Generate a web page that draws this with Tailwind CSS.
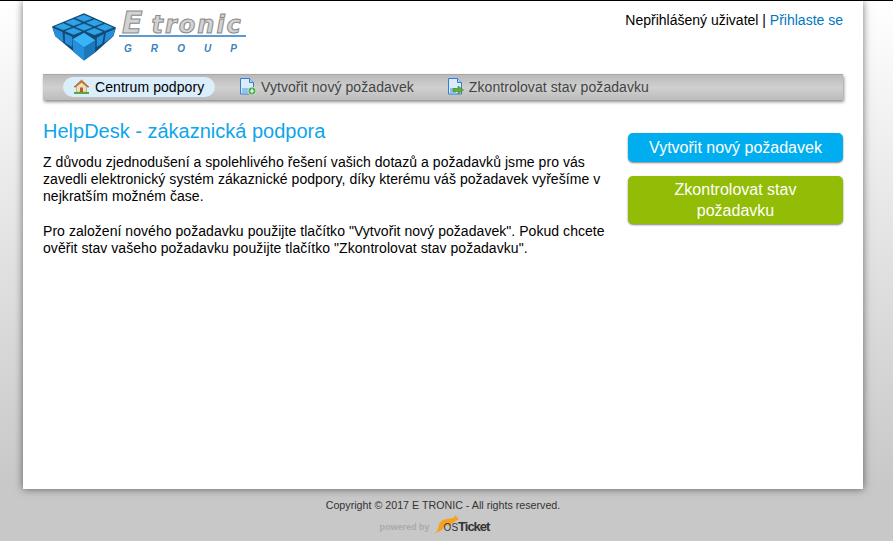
<!DOCTYPE html>
<html lang="cs">
<head>
<meta charset="utf-8">
<script src="https://cdn.jsdelivr.net/npm/@tailwindcss/browser@4"></script>
<title>HelpDesk</title>
</head>
<body class="h-[541px] overflow-hidden border-t border-black bg-gradient-to-b from-white to-[#c8c8c8] to-[90%] font-['Liberation_Sans',Arial,sans-serif] text-sm text-black">
<div class="ml-[23px] flex h-[488px] w-[840px] flex-col bg-white px-5 shadow-[0_0_8px_rgba(0,0,0,0.55)]">
  <header class="flex h-[73px] shrink-0 justify-between">
    <div class="flex pt-[9px] pl-[9px]">
      <svg width="64" height="50" viewBox="62 33 196 150" class="mt-[2px] shrink-0">
        <path d="M160 35 L258 79 L250 106 L195 155 L160 180 L125 150 L72 106 L62 76Z" fill="#124a75"/>
        <g fill="#2fa3e8" stroke="#2fa3e8" stroke-width="2" stroke-linejoin="round">
          <path d="M160 41 L184 51 L160 60 L136 50Z"/>
          <path d="M192 55 L216 65 L192 74 L168 64Z"/>
          <path d="M224 69 L248 79 L224 88 L200 78Z"/>
          <path d="M128 54 L152 64 L128 73 L104 63Z"/>
          <path d="M160 68 L184 78 L160 87 L136 77Z"/>
          <path d="M192 82 L216 92 L192 101 L168 91Z"/>
          <path d="M96 67 L120 77 L96 86 L72 76Z"/>
          <path d="M128 81 L152 91 L128 100 L104 90Z"/>
        </g>
        <g fill="#2490dc">
          <path d="M64 80 L94 93 L97 124 L72 106Z"/>
          <path d="M101 97 L124 107 L124 139 L102 126Z"/>
          <path d="M199 110 L221 99 L216 128 L199 139Z"/>
          <path d="M227 96 L256 83 L248 106 L222 126Z"/>
        </g>
        <path d="M160 95 L195 118 L160 140 L125 115Z" fill="#38b4f7"/>
        <path d="M125 115 L160 140 L160 180 L127 153Z" fill="#2490dc"/>
        <path d="M160 140 L195 118 L194 155 L160 180Z" fill="#1c78bc"/>
      </svg>
      <div class="ml-[3px] flex w-[127px] flex-col">
        <div class="flex h-[25px] items-baseline gap-[9px] pl-[3px] font-['DejaVu_Sans',sans-serif] leading-[25px] font-bold whitespace-nowrap text-[#d2d2d2] italic [-webkit-text-stroke:1px_#8a8a8a]">
          <span class="text-[30px]">E</span><span class="text-[24px] tracking-[2px]">tronic</span>
        </div>
        <div class="h-[1.5px] bg-[#5b9bd5]"></div>
        <div class="mt-[6px] flex justify-between pr-[9px] pl-[5px] text-[10px] leading-[12px] font-bold text-[#3b82c0] italic"><span>G</span><span>R</span><span>O</span><span>U</span><span>P</span></div>
      </div>
    </div>
    <p class="pt-[11px] leading-4">Nepřihlášený uživatel | <a class="text-[#0077c0]">Přihlaste se</a></p>
  </header>
  <nav class="flex h-[26px] shrink-0 items-center border-t border-[#a8a8a8] bg-gradient-to-b from-[#bababa] via-[#d0d0d0] to-[#bcbcbc] pb-[2px] pl-5 tracking-[0.07px] shadow-[1px_2px_3px_rgba(0,0,0,0.45)]">
    <a class="flex h-5 w-[152px] items-center gap-[5px] rounded-[10px] bg-[#daeefc] pl-[10px] text-black">
      <svg width="17" height="15" viewBox="0 0 17 15"><path d="M1 8 L8.5 1 L16 8 L14 8 L8.5 3.5 L3 8Z" fill="#c9742c" stroke="#8f4e1c" stroke-width=".5"/><path d="M3.5 7.5 L8.5 3.5 L13.5 7.5 V13 H3.5Z" fill="#f2dfb4" stroke="#a8865a" stroke-width=".5"/><rect x="7" y="8.5" width="3" height="4.5" fill="#a8642c"/><path d="M1 13 H16 V15 H1Z" fill="#5aa63c"/></svg>
      Centrum podpory</a>
    <a class="ml-[25px] flex items-center gap-[5px] text-[#444]">
      <svg width="16" height="17" viewBox="0 0 16 17"><path d="M.5 .5 H9.5 L13.5 4.5 V16 H.5Z" fill="#dcebfa" stroke="#2f7fd0"/><path d="M9.5 .5 V4.5 H13.5" fill="#b4d4f2" stroke="#2f7fd0"/><rect x="2" y="10" width="9" height="5" fill="#8fc0ee"/><circle cx="12" cy="13" r="4" fill="#4aa84a" stroke="#fff" stroke-width=".6"/><path d="M12 10.8 V15.2 M9.8 13 H14.2" stroke="#fff" stroke-width="1.2"/></svg>
      Vytvořit nový požadavek</a>
    <a class="ml-[34px] flex items-center gap-[5px] text-[#444]">
      <svg width="16" height="17" viewBox="0 0 16 17"><path d="M.5 .5 H9.5 L13.5 4.5 V16 H.5Z" fill="#dcebfa" stroke="#2f7fd0"/><path d="M9.5 .5 V4.5 H13.5" fill="#b4d4f2" stroke="#2f7fd0"/><rect x="2" y="10" width="6" height="5" fill="#8fc0ee"/><path d="M5 10.5 H10 V8 L15.5 12 L10 16 V13.5 H5Z" fill="#63ad3f" stroke="#3f8428" stroke-width=".6"/></svg>
      Zkontrolovat stav požadavku</a>
  </nav>
  <main class="flex justify-between pt-[20px]">
    <section class="w-[565px]">
      <h1 class="text-xl leading-[23px] font-normal text-[#0ea5e9]">HelpDesk - zákaznická podpora</h1>
      <p class="mt-[11px] leading-[17px] tracking-[0.05px]">Z důvodu zjednodušení a spolehlivého řešení vašich dotazů a požadavků jsme pro vás zavedli elektronický systém zákaznické podpory, díky kterému váš požadavek vyřešíme v nejkratším možném čase.</p>
      <p class="mt-[18px] leading-[17px] tracking-[0.05px]">Pro založení nového požadavku použijte tlačítko "Vytvořit nový požadavek". Pokud chcete ověřit stav vašeho požadavku použijte tlačítko "Zkontrolovat stav požadavku".</p>
    </section>
    <aside class="flex w-[215px] shrink-0 flex-col gap-[14px] pt-[13px] text-center text-base leading-[21px] text-white">
      <a class="rounded-[5px] bg-[#00aeef] px-2 py-1 shadow-[0_1px_2px_rgba(0,0,0,0.5)]">Vytvořit nový požadavek</a>
      <a class="rounded-[5px] bg-[#92bc05] px-4 py-[3px] shadow-[0_1px_2px_rgba(0,0,0,0.5)]">Zkontrolovat stav požadavku</a>
    </aside>
  </main>
</div>
<footer class="ml-[23px] flex w-[840px] flex-col items-center pt-[10px] text-[10.7px] leading-[13px] text-[#333]">
  <p>Copyright © 2017 E TRONIC - All rights reserved.</p>
  <div class="mt-[1px] mr-[17px] flex h-[22px] items-end">
    <span class="mb-[2px] text-[9px] leading-[12px] font-bold text-[#aaa]">powered by</span>
    <svg width="26" height="20" viewBox="0 0 26 20" class="ml-[3px] shrink-0"><path d="M0 19.5 C3 18.5 5 15 6 10 C7 6 11 4 15 4 L21 2.5 L23 0 L23.5 2 L26 4 L21 7 L18 9 L16 11 L13 10 C11 11 10 13 9 15 L5 17 Z" fill="#f7a11a"/></svg>
    <span class="mb-[1px] -ml-[15px] flex items-baseline font-bold whitespace-nowrap text-[#333]"><span class="text-[10px] leading-[13px] font-normal">OS</span><span class="text-[13px] leading-[13px] tracking-[-1px]">Ticket</span></span>
  </div>
</footer>
</body>
</html>
